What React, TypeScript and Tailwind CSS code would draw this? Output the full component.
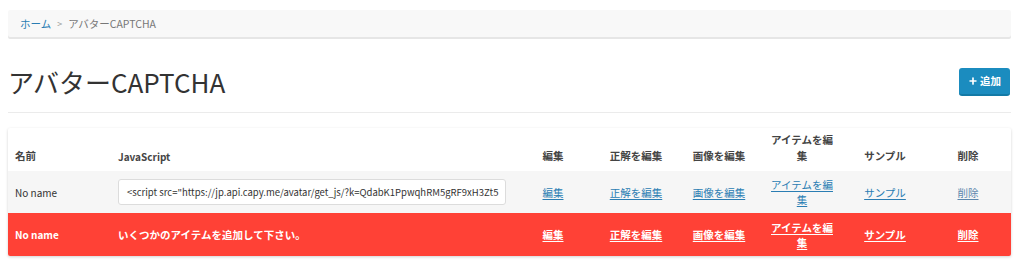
import { Plus } from "lucide-react";

const font = { fontFamily: '"Noto Sans CJK JP", "Noto Sans", sans-serif' };

const cols = "grid grid-cols-[103px_402px_80px_86px_80px_86px_80px_86px]";

const actions = ["編集", "正解を編集", "画像を編集", "アイテムを編集", "サンプル", "削除"];

function ActionCells({ red }: { red?: boolean }) {
  return (
    <>
      {actions.map((a, i) => (
        <div key={a} className="flex items-center justify-center px-[7px] text-center">
          <span className="max-w-[64px] leading-[15px]">
            <a
              href="#"
              className={
                "underline underline-offset-2 " +
                (red ? "font-bold text-white" : i === 5 ? "text-[#5d87ad]" : "text-[#2a7db3]")
              }
            >
              {a}
            </a>
          </span>
        </div>
      ))}
    </>
  );
}

export default function App() {
  return (
    <div className="min-h-screen bg-white px-2 pt-[10px] text-[#333]" style={font}>
      {/* breadcrumb */}
      <div className="flex h-[27px] items-center rounded-[2px] bg-[#f8f8f8] px-3 text-[10.5px] shadow-[0_2px_0_#e6e6e6]">
        <a href="#" className="text-[#2a7db3]">ホーム</a>
        <span className="mx-[6px] text-[9px] text-[#999]">&gt;</span>
        <span className="text-[#777]">アバターCAPTCHA</span>
      </div>

      {/* title */}
      <div className="mt-[27px] flex items-center justify-between border-b border-[#ebebeb] pb-[12px]">
        <h1 className="text-[26px] leading-[36px] text-[#333]">アバターCAPTCHA</h1>
        <button className="mr-[1px] flex h-[28px] w-[51px] items-center justify-center gap-[2px] rounded-[3px] border-b-2 border-[#137aa6] bg-[#1b8cbf] text-[10.5px] font-bold text-white">
          <Plus size={10} strokeWidth={4} />
          追加
        </button>
      </div>

      {/* table */}
      <div className="mt-[15px] overflow-hidden rounded-[2px] bg-white text-[10.5px] shadow-[0_1px_3px_rgba(0,0,0,0.18)]">
        <div className={cols + " h-[43px] font-bold text-[#444]"}>
          <div className="flex items-end px-[7px] pb-[7px]">名前</div>
          <div className="flex items-end px-[7px] pb-[7px] text-[10px]">JavaScript</div>
          {actions.map((a) => (
            <div key={a} className="flex items-end justify-center px-[7px] pb-[7px] text-center">
              <span className="max-w-[64px] leading-[16px]">{a}</span>
            </div>
          ))}
        </div>

        <div className={cols + " h-[42px] bg-[#f6f6f6]"}>
          <div className="flex items-center px-[7px] text-[10px]">No name</div>
          <div className="flex items-center px-[7px]">
            <div className="flex h-[26px] w-full items-center overflow-hidden whitespace-nowrap rounded-[3px] border border-[#dcdcdc] bg-white px-[8px] text-[9.5px] text-[#333]">
              &lt;script src="https://jp.api.capy.me/avatar/get_js/?k=QdabK1PpwqhRM5gRF9xH3Zt5
            </div>
          </div>
          <ActionCells />
        </div>

        <div className={cols + " h-[43px] bg-[#ff4136] font-bold text-white"}>
          <div className="flex items-center px-[7px] text-[10px]">No name</div>
          <div className="flex items-center px-[7px]">いくつかのアイテムを追加して下さい。</div>
          <ActionCells red />
        </div>
      </div>
    </div>
  );
}
